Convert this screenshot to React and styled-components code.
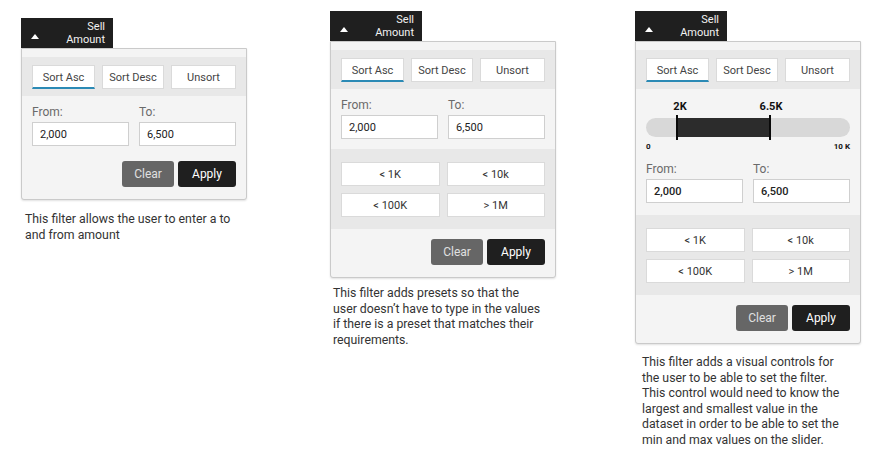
import React from 'react';
import styled, { createGlobalStyle } from 'styled-components';

const GlobalStyle = createGlobalStyle`
  body {
    margin: 0;
    background: #ffffff;
    font-family: Roboto, "Liberation Sans", sans-serif;
  }
`;

const filters = [
  {
    left: 21,
    top: 18,
    slider: false,
    presets: false,
    textGap: 12,
    textIndent: 4,
    lines: ['This filter allows the user to enter a to', 'and from amount'],
  },
  {
    left: 83,
    top: 11,
    slider: false,
    presets: true,
    textGap: 8,
    textIndent: 3,
    lines: [
      'This filter adds presets so that the',
      'user doesn’t have to type in the values',
      'if there is a preset that matches their',
      'requirements.',
    ],
  },
  {
    left: 79,
    top: 11,
    slider: true,
    presets: true,
    textGap: 11,
    textIndent: 7,
    lines: [
      'This filter adds a visual controls for',
      'the user to be able to set the filter.',
      'This control would need to know the',
      'largest and smallest value in the',
      'dataset in order to be able to set the',
      'min and max values on the slider.',
    ],
  },
];

const presets = ['< 1K', '< 10k', '< 100K', '> 1M'];

const FilterCard = ({ filter }) => (
  <Column $left={filter.left} $top={filter.top}>
    <HeaderTab>
      <Caret />
      <HeaderTitle>
        <span>Sell</span>
        <span>Amount</span>
      </HeaderTitle>
    </HeaderTab>
    <Panel>
      <SortBand>
        <SortButton $w={63} $active>Sort Asc</SortButton>
        <SortButton $w={62}>Sort Desc</SortButton>
        <SortButton>Unsort</SortButton>
      </SortBand>
      <FormArea $pb={filter.presets ? (filter.slider ? 12 : 10) : 5}>
        {filter.slider && (
          <SliderBlock>
            <ValueRow>
              <ValueLabel style={{ left: 34 }}>2K</ValueLabel>
              <ValueLabel style={{ left: 125 }}>6.5K</ValueLabel>
            </ValueRow>
            <Track>
              <Fill style={{ left: 31, width: 93 }} />
              <Tick style={{ left: 30 }} />
              <Tick style={{ left: 123 }} />
            </Track>
            <AxisRow>
              <span>0</span>
              <span>10 K</span>
            </AxisRow>
          </SliderBlock>
        )}
        <FieldGrid>
          <Field>
            <FieldLabel>From:</FieldLabel>
            <Input $bold={filter.slider}>2,000</Input>
          </Field>
          <Field>
            <FieldLabel>To:</FieldLabel>
            <Input $bold={filter.slider}>6,500</Input>
          </Field>
        </FieldGrid>
      </FormArea>
      {filter.presets && (
        <PresetBand>
          {presets.map((p) => (
            <PresetButton key={p}>{p}</PresetButton>
          ))}
        </PresetBand>
      )}
      <Footer>
        <ClearButton>Clear</ClearButton>
        <ApplyButton>Apply</ApplyButton>
      </Footer>
    </Panel>
    <Description $gap={filter.textGap} $indent={filter.textIndent}>
      {filter.lines.map((line) => (
        <div key={line}>{line}</div>
      ))}
    </Description>
  </Column>
);

export default function App() {
  return (
    <>
      <GlobalStyle />
      <Page>
        {filters.map((f, i) => (
          <FilterCard key={i} filter={f} />
        ))}
      </Page>
    </>
  );
}

const Page = styled.div`
  display: flex;
  align-items: flex-start;
  width: 885px;
  height: 468px;
  background: #ffffff;
`;

const Column = styled.div`
  display: flex;
  flex-direction: column;
  width: 226px;
  margin-left: ${(p) => p.$left}px;
  margin-top: ${(p) => p.$top}px;
`;

const HeaderTab = styled.div`
  display: flex;
  align-items: center;
  justify-content: space-between;
  width: 92px;
  height: 30px;
  box-sizing: border-box;
  padding: 0 8px 0 10px;
  background: #1f1f1f;
  color: #ffffff;
`;

const Caret = styled.span`
  width: 0;
  height: 0;
  margin-top: 7px;
  border-left: 4px solid transparent;
  border-right: 4px solid transparent;
  border-bottom: 5px solid #ffffff;
`;

const HeaderTitle = styled.div`
  display: flex;
  flex-direction: column;
  align-items: flex-end;
  font-size: 11px;
  line-height: 13px;
  color: #f2f2f2;
`;

const Panel = styled.div`
  display: flex;
  flex-direction: column;
  border: 1px solid #cacaca;
  border-radius: 0 0 3px 3px;
  background: #f4f4f4;
  padding-top: 8px;
  box-shadow: 0 1px 2px rgba(0, 0, 0, 0.12);
`;

const SortBand = styled.div`
  display: flex;
  gap: 7px;
  padding: 8px 10px 7px;
  background: #e8e8e8;
`;

const SortButton = styled.div`
  ${(p) => (p.$w ? `width: ${p.$w}px;` : 'flex: 1;')}
  height: 24px;
  box-sizing: border-box;
  display: flex;
  align-items: center;
  justify-content: center;
  background: #ffffff;
  border: 1px solid #dadada;
  border-bottom: ${(p) => (p.$active ? '2px solid #2b8ab5' : '1px solid #dadada')};
  font-size: 11px;
  color: #444;
  padding-top: ${(p) => (p.$active ? '1px' : '0')};
`;

const FormArea = styled.div`
  padding: 8px 10px ${(p) => p.$pb}px;
  background: #f4f4f4;
`;

const FieldGrid = styled.div`
  display: grid;
  grid-template-columns: 1fr 1fr;
  gap: 10px;
`;

const Field = styled.div`
  display: flex;
  flex-direction: column;
  gap: 2px;
`;

const FieldLabel = styled.div`
  font-size: 12px;
  line-height: 16px;
  color: #6a6a6a;
`;

const Input = styled.div`
  height: 24px;
  box-sizing: border-box;
  display: flex;
  align-items: center;
  padding: 0 7px;
  background: #ffffff;
  border: 1px solid #cfcfcf;
  font-size: 11px;
  color: #222;
  font-weight: ${(p) => (p.$bold ? 500 : 400)};
`;

const SliderBlock = styled.div`
  display: flex;
  flex-direction: column;
  height: 60px;
  margin-bottom: 4px;
`;

const ValueRow = styled.div`
  position: relative;
  height: 21px;
`;

const ValueLabel = styled.span`
  position: absolute;
  top: 3px;
  transform: translateX(-50%);
  font-size: 11px;
  line-height: 13px;
  font-weight: 700;
  color: #111;
`;

const Track = styled.div`
  position: relative;
  height: 19px;
  border-radius: 10px;
  background: #d8d8d8;
`;

const Fill = styled.div`
  position: absolute;
  top: 0;
  bottom: 0;
  background: #2c2c2c;
`;

const Tick = styled.div`
  position: absolute;
  top: -3px;
  bottom: -3px;
  width: 2px;
  background: #0a0a0a;
`;

const AxisRow = styled.div`
  display: flex;
  justify-content: space-between;
  margin-top: 5px;
  font-size: 8px;
  line-height: 10px;
  font-weight: 700;
  color: #111;
`;

const PresetBand = styled.div`
  display: grid;
  grid-template-columns: 1fr 1fr;
  gap: 7px;
  padding: 13px 10px 12px;
  background: #e8e8e8;
`;

const PresetButton = styled.div`
  height: 24px;
  box-sizing: border-box;
  display: flex;
  align-items: center;
  justify-content: center;
  background: #ffffff;
  border: 1px solid #dadada;
  font-size: 11px;
  color: #333;
`;

const Footer = styled.div`
  display: flex;
  justify-content: flex-end;
  gap: 4px;
  padding: 10px 10px 12px;
`;

const BaseButton = styled.div`
  height: 26px;
  display: flex;
  align-items: center;
  justify-content: center;
  border-radius: 3px;
  font-size: 12px;
`;

const ClearButton = styled(BaseButton)`
  width: 52px;
  background: #666666;
  color: #e0e0e0;
`;

const ApplyButton = styled(BaseButton)`
  width: 58px;
  background: #1f1f1f;
  color: #ffffff;
`;

const Description = styled.div`
  margin-top: ${(p) => p.$gap}px;
  padding-left: ${(p) => p.$indent}px;
  font-size: 12.3px;
  line-height: 15.5px;
  color: #333;
  white-space: nowrap;
`;
